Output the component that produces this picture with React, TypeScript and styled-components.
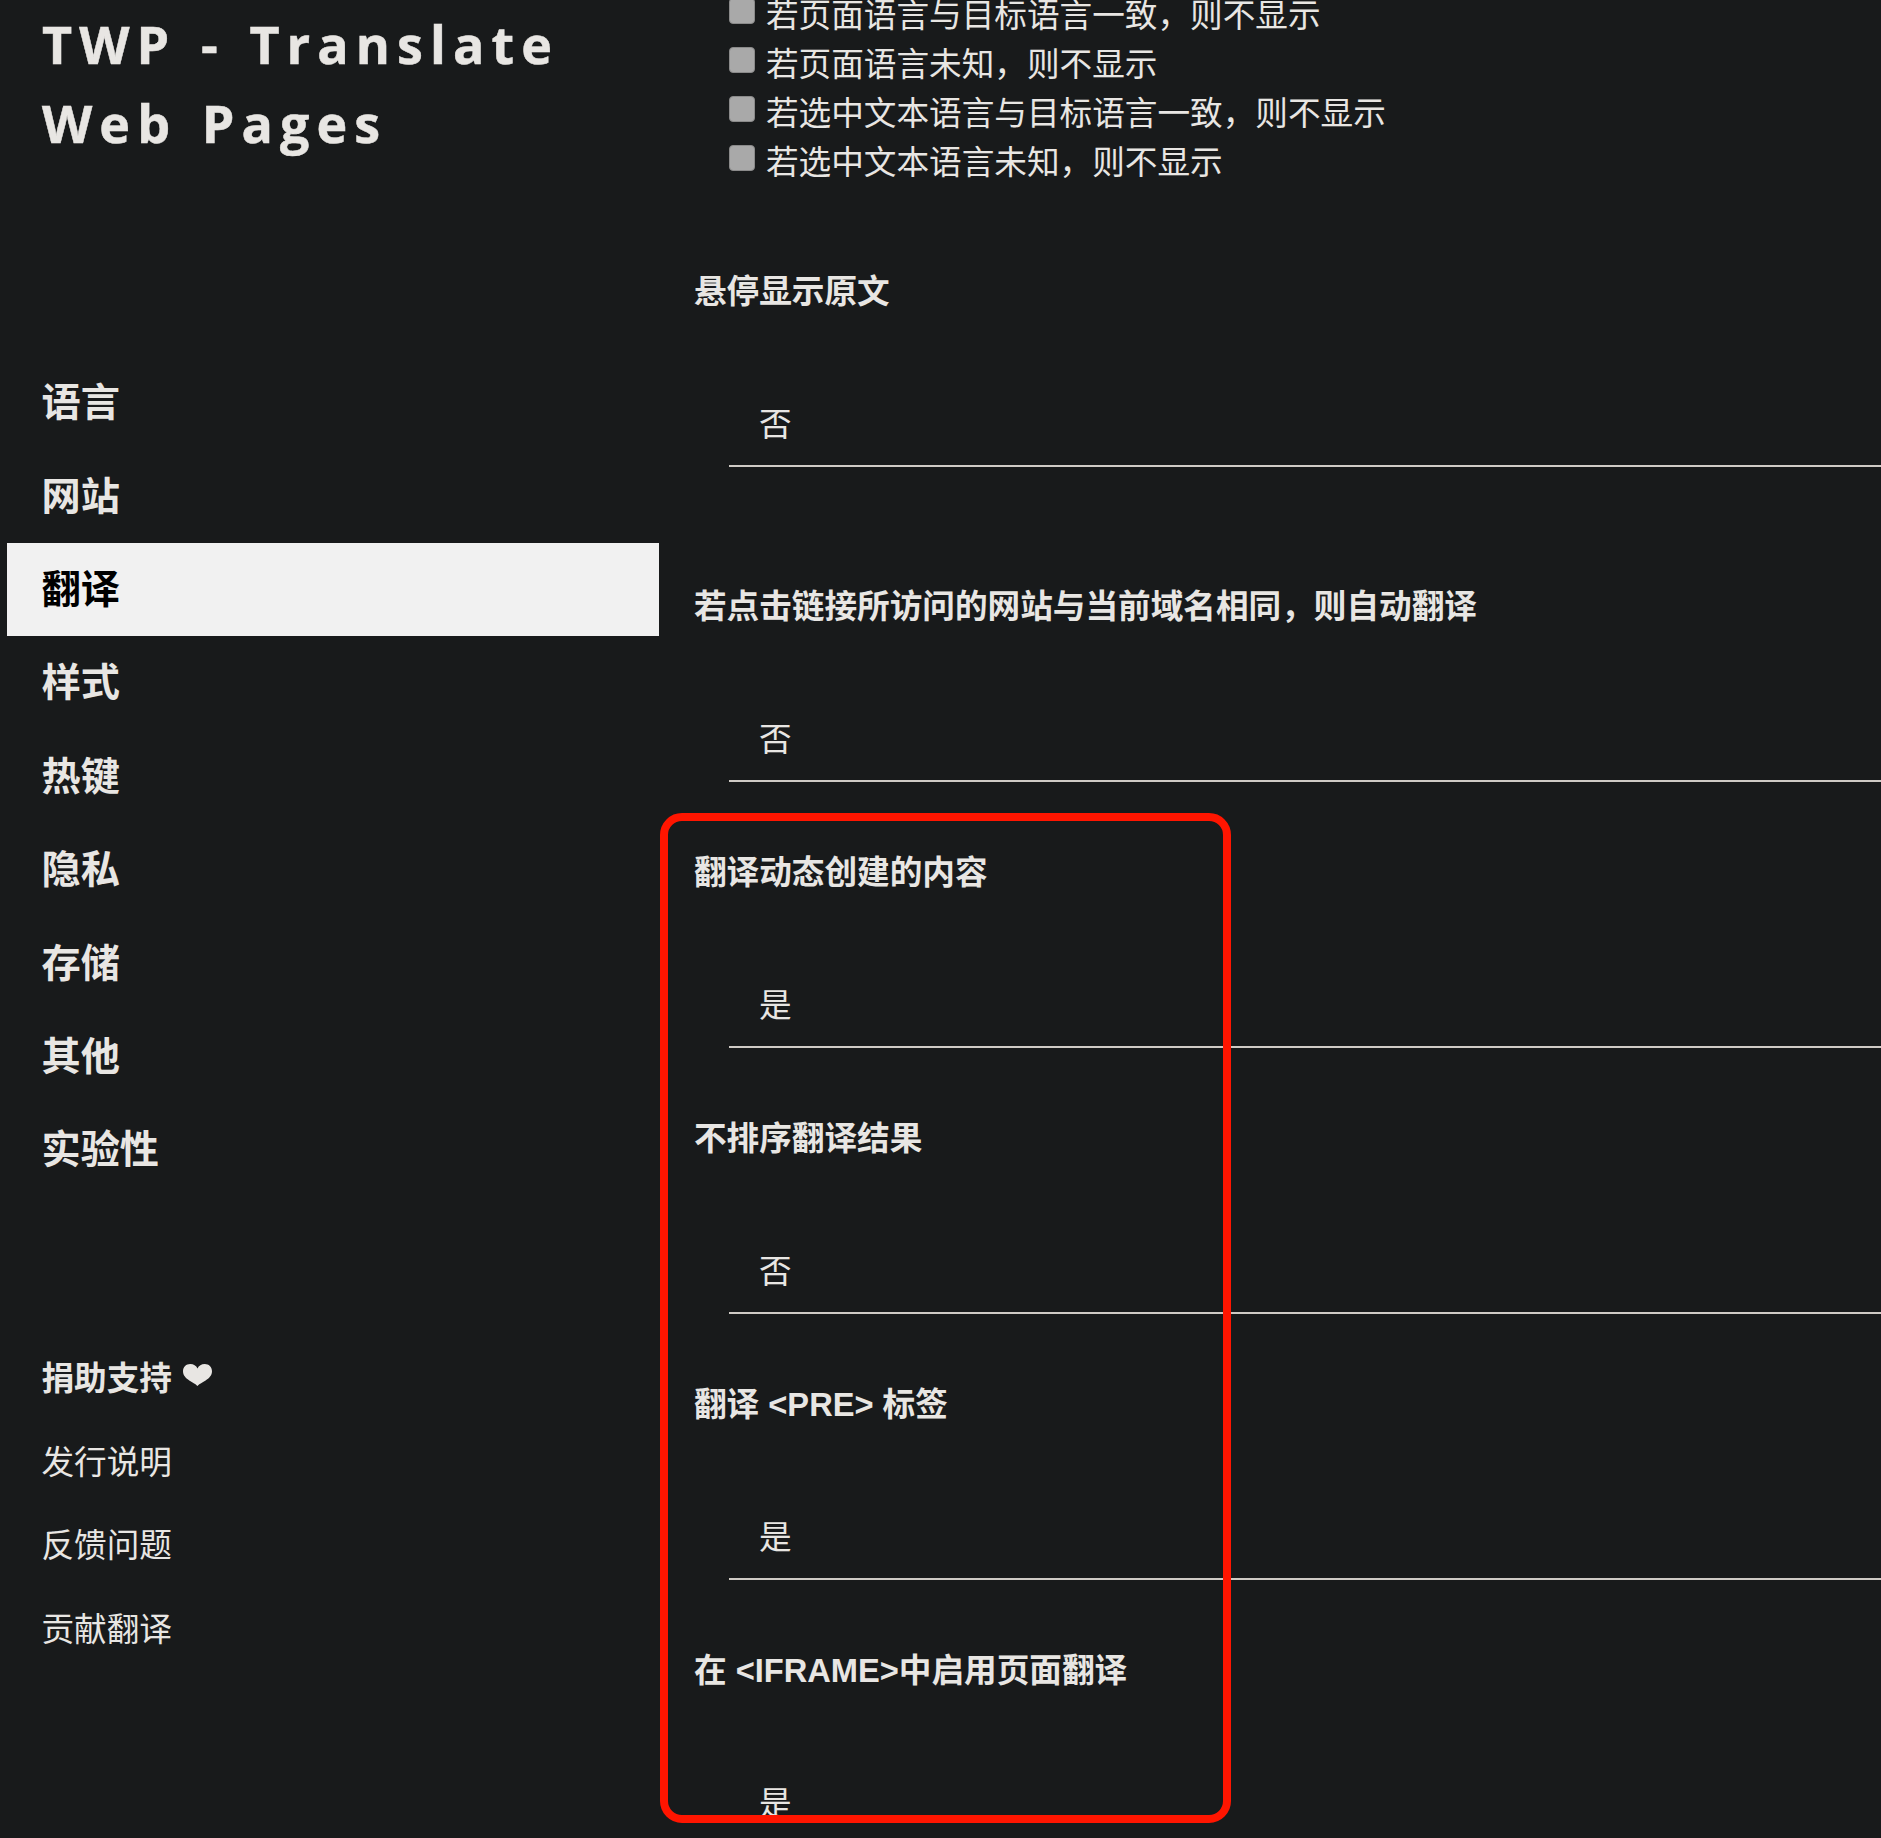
import React from "react";
import styled, { createGlobalStyle } from "styled-components";

const GlobalStyle = createGlobalStyle`
  html, body {
    margin: 0;
    padding: 0;
    background: #181a1b;
  }
  body {
    font-family: "Liberation Sans", "Noto Sans CJK SC", sans-serif;
    color: #e8e6e3;
  }
`;

const Page = styled.div`
  position: relative;
  display: flex;
  height: 1838px;
  overflow: hidden;
  background: #181a1b;
`;

const Sidebar = styled.aside`
  flex: 0 0 652px;
  margin-left: 7px;
  display: flex;
  flex-direction: column;
`;

const Title = styled.h1`
  margin: 0;
  padding: 5px 0 0 35px;
  height: 356px;
  box-sizing: border-box;
  font-family: "Open Sans", sans-serif;
  font-size: 52px;
  font-weight: 700;
  line-height: 78.6px;
  letter-spacing: 7.1px;
  word-spacing: 4px;
  -webkit-text-stroke: 0.5px #e8e6e3;
`;

const Nav = styled.nav`
  display: flex;
  flex-direction: column;
`;

const NavItem = styled.a<{ $active?: boolean }>`
  display: flex;
  align-items: center;
  height: 93.4px;
  box-sizing: border-box;
  padding: 0 0 7px 34.5px;
  font-size: 39.2px;
  font-weight: 700;
  background: ${(p) => (p.$active ? "#f1f1f1" : "transparent")};
  color: ${(p) => (p.$active ? "#000" : "#e8e6e3")};
`;

const FooterLinks = styled.div`
  display: flex;
  flex-direction: column;
  margin-top: 137px;
`;

const FooterLink = styled.a<{ $bold?: boolean }>`
  display: flex;
  align-items: center;
  gap: 11px;
  height: 83.7px;
  padding-left: 34.5px;
  font-size: 32.64px;
  font-weight: ${(p) => (p.$bold ? 700 : 400)};
`;

const Main = styled.main`
  flex: 1;
  min-width: 0;
  margin-top: -12px;
  padding-left: 35px;
`;

const OptionList = styled.div`
  margin-left: 35px;
  margin-bottom: 84px;
`;

const OptionRow = styled.label`
  display: flex;
  align-items: center;
  height: 49px;
  font-size: 32.64px;
  white-space: nowrap;
`;

const Checkbox = styled.span`
  flex: 0 0 auto;
  width: 26px;
  height: 26px;
  margin-right: 11px;
  margin-top: -3px;
  box-sizing: border-box;
  border-radius: 4px;
  background: #a9a9a9;
  border: 1px solid #8a8a8a;
`;

const Field = styled.section<{ $wide?: boolean }>`
  margin-bottom: ${(p) => (p.$wide ? "116px" : "67px")};
`;

const FieldLabel = styled.div`
  height: 48px;
  line-height: 48px;
  font-size: 32.64px;
  font-weight: 700;
  white-space: nowrap;
`;

const SelectBox = styled.div`
  margin: 67px 0 0 35px;
  height: 84px;
  box-sizing: border-box;
  padding: 18px 0 0 30px;
  line-height: 48px;
  font-size: 32.64px;
  border-bottom: 2px solid #cfcbc5;
`;

const Annotation = styled.div`
  position: absolute;
  left: 660px;
  top: 813px;
  width: 571px;
  height: 1010px;
  box-sizing: border-box;
  border: 8px solid #ff1500;
  border-radius: 22px;
  pointer-events: none;
`;

const Heart = () => (
  <svg width="29" height="22" viewBox="0 0 29 22">
    <path
      d="M14.5 22C12 18.5 0 15.500 0 7.200 0 2.800 3.300 0 7.200 0c3.400 0 6 1.800 7.300 4.400C15.800 1.800 18.400 0 21.800 0 25.700 0 29 2.800 29 7.200 29 15.500 17 18.500 14.500 22z"
      fill="#e8e6e3"
    />
  </svg>
);

const navItems = ["语言", "网站", "翻译", "样式", "热键", "隐私", "存储", "其他", "实验性"];

const options = [
  "若页面语言与目标语言一致，则不显示",
  "若页面语言未知，则不显示",
  "若选中文本语言与目标语言一致，则不显示",
  "若选中文本语言未知，则不显示",
];

const fields = [
  { label: "悬停显示原文", value: "否", wide: true },
  { label: "若点击链接所访问的网站与当前域名相同，则自动翻译", value: "否" },
  { label: "翻译动态创建的内容", value: "是" },
  { label: "不排序翻译结果", value: "否" },
  { label: "翻译 <PRE> 标签", value: "是" },
  { label: "在 <IFRAME>中启用页面翻译", value: "是" },
];

export default function App() {
  return (
    <>
      <GlobalStyle />
      <Page>
        <Sidebar>
          <Title>
            TWP - Translate
            <br />
            Web Pages
          </Title>
          <Nav>
            {navItems.map((item) => (
              <NavItem key={item} $active={item === "翻译"}>
                {item}
              </NavItem>
            ))}
          </Nav>
          <FooterLinks>
            <FooterLink $bold>
              捐助支持 <Heart />
            </FooterLink>
            <FooterLink>发行说明</FooterLink>
            <FooterLink>反馈问题</FooterLink>
            <FooterLink>贡献翻译</FooterLink>
          </FooterLinks>
        </Sidebar>
        <Main>
          <OptionList>
            {options.map((option) => (
              <OptionRow key={option}>
                <Checkbox />
                {option}
              </OptionRow>
            ))}
          </OptionList>
          {fields.map((field) => (
            <Field key={field.label} $wide={field.wide}>
              <FieldLabel>{field.label}</FieldLabel>
              <SelectBox>{field.value}</SelectBox>
            </Field>
          ))}
        </Main>
        <Annotation />
      </Page>
    </>
  );
}
